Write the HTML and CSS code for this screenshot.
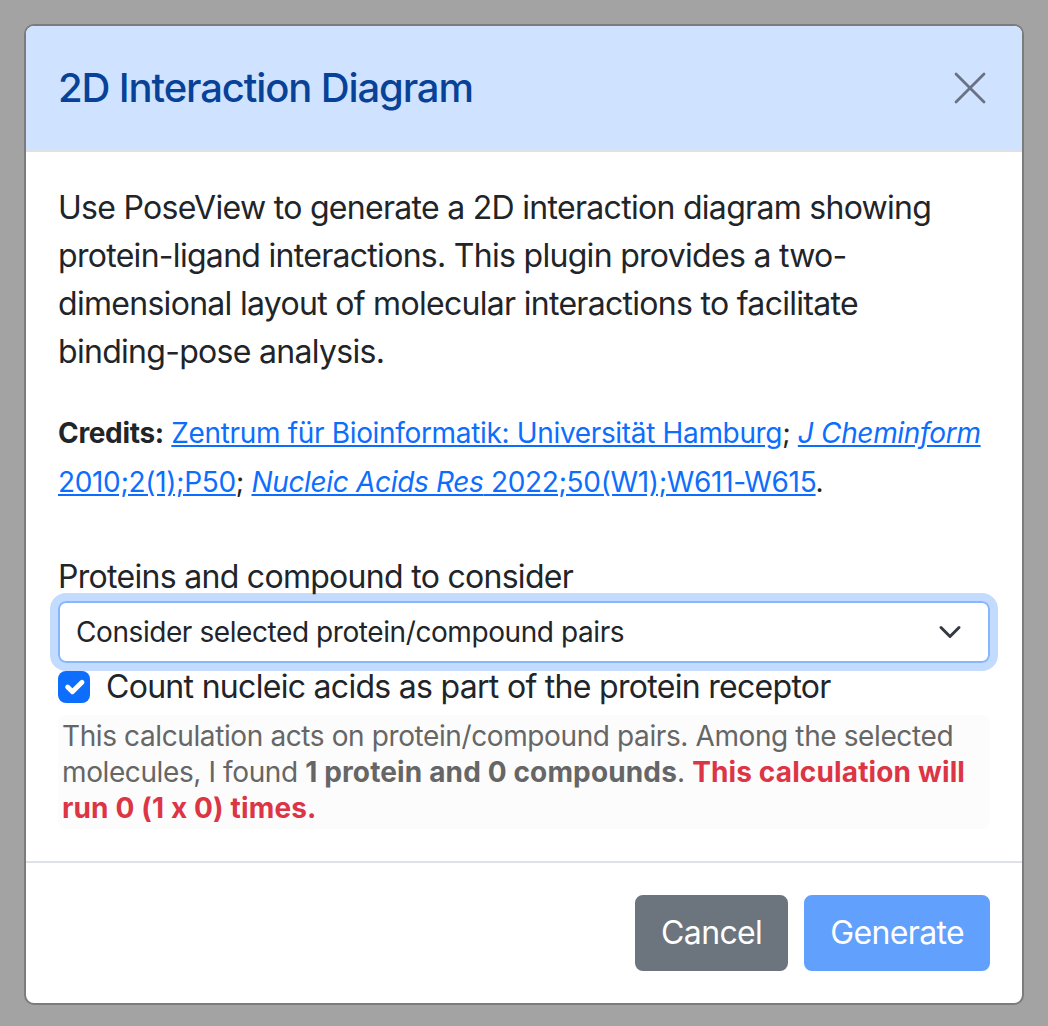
FILE: index.html
```html
<!DOCTYPE html>
<html lang="en">
<head>
    <meta charset="UTF-8">
    <title>2D Interaction Diagram</title>
    <link rel="stylesheet" href="styles.css">
</head>
<body>
    <div class="modal">
        <div class="modal-header">
            <h5 class="modal-title">2D Interaction Diagram</h5>
            <button type="button" class="btn-close" aria-label="Close">
                <svg viewBox="0 0 16 16" width="32" height="32">
                    <path d="M1 1L15 15M15 1L1 15" stroke="currentColor" stroke-width="1.4" stroke-linecap="round" fill="none"/>
                </svg>
            </button>
        </div>

        <div class="modal-body">
            <p>Use PoseView to generate a 2D interaction diagram showing protein-ligand interactions. This plugin provides a two-dimensional layout of molecular interactions to facilitate <span class="nowrap">binding-pose</span> analysis.</p>

            <p class="credits"><small><b>Credits:</b> <a href="#">Zentrum für Bioinformatik: Universität Hamburg</a>; <a href="#"><i>J Cheminform</i> 2010;2(1);P50</a>; <a href="#"><i>Nucleic Acids Res</i> 2022;50(W1);W611-W615</a>.</small></p>

            <div class="field">
                <label for="pairs">Proteins and compound to consider</label>
                <div class="select">
                    <span>Consider selected protein/compound pairs</span>
                    <svg viewBox="0 0 16 16" width="24" height="24">
                        <path d="M2 5l6 6 6-6" stroke="#343a40" stroke-width="2" stroke-linecap="round" stroke-linejoin="round" fill="none"/>
                    </svg>
                </div>
                <div class="form-check">
                    <span class="check-box">
                        <svg viewBox="0 0 20 20" width="32" height="32">
                            <path d="M6 10l3 3 6-6" stroke="#fff" stroke-width="3" stroke-linecap="round" stroke-linejoin="round" fill="none"/>
                        </svg>
                    </span>
                    <label>Count nucleic acids as part of the protein receptor</label>
                </div>
                <div class="info">
                    This calculation acts on protein/compound pairs. Among the selected molecules, I found <b>1 protein and 0 compounds</b>. <span class="warn">This calculation will run 0 (1 x 0) times.</span>
                </div>
            </div>
        </div>

        <div class="modal-footer">
            <button type="button" class="btn btn-secondary">Cancel</button>
            <button type="button" class="btn btn-primary" disabled>Generate</button>
        </div>
    </div>
</body>
</html>
```

FILE: styles.css
```css
body {
    margin: 0;
    padding: 24px;
    background-color: #a3a3a3;
    font-family: Inter, "Noto Sans", sans-serif;
    font-feature-settings: "calt" 0;
    color: #212529;
}

.modal {
    width: 1000px;
    box-sizing: border-box;
    background-color: white;
    border: 2px solid #7c7c7c;
    border-radius: 10px;
    overflow: hidden;
}

.modal-header {
    display: flex;
    align-items: center;
    padding: 32px;
    background-color: #cfe2ff;
    border-bottom: 2px solid #dee2e6;
}

.modal-title {
    margin: 0;
    font-size: 40px;
    line-height: 60px;
    font-weight: 500;
    letter-spacing: -0.028em;
    color: #084298;
}

.btn-close {
    margin: -8px -4px -8px auto;
    padding: 8px;
    border: none;
    background: none;
    color: #687282;
    display: flex;
    cursor: pointer;
}

.modal-body {
    padding: 32px;
    font-size: 32px;
    line-height: 48px;
    letter-spacing: -0.022em;
}

.modal-body p {
    margin: 0 0 32px 0;
}

.nowrap {
    white-space: nowrap;
}

.credits small {
    font-size: 28px;
    letter-spacing: -0.012em;
}

.credits a {
    color: #0d6efd;
}

.field {
    padding-top: 15px;
}

.field > label {
    display: block;
}

.select {
    display: flex;
    align-items: center;
    justify-content: space-between;
    height: 62px;
    box-sizing: border-box;
    padding: 0 24px 0 16px;
    border: 2px solid #86b7fe;
    border-radius: 8px;
    box-shadow: 0 0 0 8px rgba(13, 110, 253, 0.25);
    font-size: 28px;
    line-height: 42px;
    letter-spacing: -0.015em;
}

.select svg {
    margin-right: 2px;
}

.form-check {
    display: flex;
    align-items: flex-start;
    margin-bottom: 4px;
}

.check-box {
    display: flex;
    width: 32px;
    height: 32px;
    margin-top: 8px;
    margin-right: 16px;
    border-radius: 8px;
    background-color: #0d6efd;
}

.info {
    padding: 3px 4px;
    background-color: #fcfcfc;
    border-radius: 8px;
    color: #666;
    font-size: 28px;
    line-height: 36px;
    letter-spacing: -0.014em;
}

.info b {
    font-weight: 700;
    letter-spacing: 0.005em;
}

.warn {
    color: #dc3545;
    font-weight: 700;
    letter-spacing: 0.005em;
}

.modal-footer {
    display: flex;
    justify-content: flex-end;
    gap: 16px;
    padding: 32px;
    border-top: 2px solid #dee2e6;
}

.btn {
    font-family: inherit;
    font-feature-settings: "calt" 0;
    font-size: 32px;
    line-height: 48px;
    letter-spacing: -0.02em;
    padding: 12px 24px;
    border: 2px solid transparent;
    border-radius: 8px;
    color: white;
    cursor: pointer;
}

.btn-secondary {
    background-color: #6c757d;
    border-color: #6c757d;
}

.btn-primary {
    background-color: #0d6efd;
    border-color: #0d6efd;
}

.btn-primary:disabled {
    opacity: 0.65;
    cursor: default;
}
```
